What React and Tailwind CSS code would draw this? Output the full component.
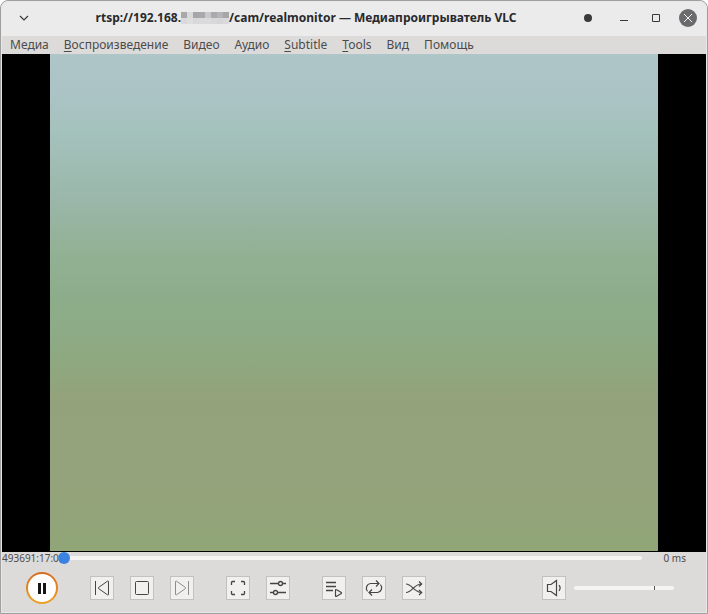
const MENUS = [
  { label: 'Медиа' },
  { label: 'Воспроизведение', mnemonic: true },
  { label: 'Видео' },
  { label: 'Аудио' },
  { label: 'Subtitle', mnemonic: true },
  { label: 'Tools', mnemonic: true },
  { label: 'Вид' },
  { label: 'Помощь' },
];

// Pixelated cover over the private part of the address
const MOSAIC = [
  'bg-[#a9a8aa]', 'bg-[#d9d9db]', 'bg-[#a6a5a7]', 'bg-[#a9a8aa]', 'bg-[#c9c9cb]', 'bg-[#aaa9ab]', 'bg-[#b4b3b5]', 'bg-[#a6a5a7]',
  'bg-[#dadadc]', 'bg-[#dededf]', 'bg-[#d8d8da]', 'bg-[#dadadc]', 'bg-[#dadadc]', 'bg-[#d8d8da]', 'bg-[#d6d6d8]', 'bg-[#dadadc]',
];

function Icon({ children }) {
  return (
    <svg viewBox="0 0 24 24" className="size-6 shrink-0" fill="none" stroke="currentColor" aria-hidden="true">
      {children}
    </svg>
  );
}

function WindowButton({ label, children }) {
  return (
    <button type="button" aria-label={label} className="flex h-8 w-8 items-center justify-center text-[#3a3a3c]">
      {children}
    </button>
  );
}

function ToolButton({ label, muted, children }) {
  return (
    <button
      type="button"
      aria-label={label}
      className={`flex size-6 items-center justify-center bg-[#f1f0ef] outline -outline-offset-1 outline-[#c3c1bf] ${muted ? 'text-[#8e8d8d]' : 'text-[#454546]'}`}
    >
      <Icon>{children}</Icon>
    </button>
  );
}

function TitleBar() {
  return (
    <header className="flex h-[34px] items-center bg-[#ebebec] pl-1.5 pr-0.5">
      <WindowButton label="Меню окна">
        <Icon><path strokeWidth="1.200" d="M8 9l4 4 4-4" /></Icon>
      </WindowButton>
      <h1 className="flex flex-1 items-center justify-center whitespace-nowrap pb-0.5 text-[12px] leading-4 font-bold text-[#29292b]">
        <span>rtsp://192.168.</span>
        <span className="grid w-12 grid-cols-8" aria-hidden="true">
          {MOSAIC.map((tone, i) => (
            <span key={i} className={`h-1.5 ${tone}`} />
          ))}
        </span>
        <span>/cam/realmonitor — Медиапроигрыватель VLC</span>
      </h1>
      <div className="flex">
        <div className="pr-1">
          <WindowButton label="Закрепить">
            <Icon><circle cx="12" cy="11" r="4" fill="currentColor" stroke="none" /></Icon>
          </WindowButton>
        </div>
        <WindowButton label="Свернуть">
          <Icon><path d="M8 13.500h8" /></Icon>
        </WindowButton>
        <WindowButton label="Развернуть">
          <Icon><path d="M8.500 7.500h7v7h-7z" /></Icon>
        </WindowButton>
        <WindowButton label="Закрыть">
          <Icon>
            <circle cx="12" cy="11" r="9" fill="#6b6a6c" stroke="none" />
            <path d="M8 7l8 8M16 7l-8 8" stroke="#f2f2f2" />
          </Icon>
        </WindowButton>
      </div>
    </header>
  );
}

function MenuBar() {
  return (
    <nav className="flex h-[18px] items-center gap-[15px] bg-[#dddbda] pl-2 text-[12px] leading-4 text-[#4c4b4c]">
      {MENUS.map(({ label, mnemonic }) => (
        <button key={label} type="button" className="whitespace-nowrap">
          {mnemonic ? (
            <>
              <span className="underline underline-offset-2">{label[0]}</span>
              {label.slice(1)}
            </>
          ) : (
            label
          )}
        </button>
      ))}
    </nav>
  );
}

function SeekBar() {
  return (
    <div className="flex h-3 items-center text-[10px] leading-3 text-[#4c4b4c]">
      <span className="w-14 whitespace-nowrap">493691:17:0</span>
      <input
        type="range"
        aria-label="Позиция воспроизведения"
        min="0"
        max="100"
        defaultValue="0"
        className="h-3 min-w-0 flex-1 appearance-none bg-transparent [&::-webkit-slider-runnable-track]:h-1 [&::-webkit-slider-runnable-track]:rounded-full [&::-webkit-slider-runnable-track]:bg-[#f5f4f2] [&::-webkit-slider-thumb]:-mt-1 [&::-webkit-slider-thumb]:size-3 [&::-webkit-slider-thumb]:appearance-none [&::-webkit-slider-thumb]:rounded-full [&::-webkit-slider-thumb]:bg-[#3c82e0]"
      />
      <span className="w-16 pr-5 text-right">0 ms</span>
    </div>
  );
}

function Controls() {
  return (
    <div className="flex h-12 items-center pl-6 pr-8">
      <button
        type="button"
        aria-label="Пауза"
        className="mr-8 size-8 rounded-full bg-linear-to-b from-[#d66a20] to-[#eda323] p-0.5"
      >
        <span className="flex size-7 items-center justify-center gap-0.5 rounded-full bg-white">
          <span className="h-[11px] w-[3px] bg-[#161616]" />
          <span className="h-[11px] w-[3px] bg-[#161616]" />
        </span>
      </button>
      <div className="flex gap-8">
        <div className="flex gap-4">
          <ToolButton label="Предыдущее">
            <path d="M5.500 5v14M18.500 5.500v13a.6.6 0 0 1-.9.4L8.500 12.500a.6.6 0 0 1 0-1L17.600 5.100a.6.6 0 0 1 .9.4z" />
          </ToolButton>
          <ToolButton label="Стоп">
            <rect x="5.500" y="5.500" width="13" height="13" rx="1" />
          </ToolButton>
          <ToolButton label="Следующее" muted>
            <path d="M18.500 5v14M5.500 5.500v13a.6.6 0 0 0 .9.4L15.500 12.500a.6.6 0 0 0 0-1L6.400 5.100a.6.6 0 0 0-.9.4z" />
          </ToolButton>
        </div>
        <div className="flex gap-4">
          <ToolButton label="Полный экран">
            <path strokeWidth="1.300" d="M5.500 9V6.500a1 1 0 0 1 1-1H9M15 5.500h2.500a1 1 0 0 1 1 1V9M18.500 15v2.500a1 1 0 0 1-1 1H15M9 18.500H6.500a1 1 0 0 1-1-1V15" />
          </ToolButton>
          <ToolButton label="Расширенные настройки">
            <path strokeWidth="1.300" d="M4 7.500h8.500M16.500 7.500H20M4 16.500h3.500M11.500 16.500H20" />
            <circle cx="14.500" cy="7.500" r="2" strokeWidth="1.300" />
            <circle cx="9.500" cy="16.500" r="2" strokeWidth="1.300" />
          </ToolButton>
        </div>
        <div className="flex gap-4">
          <ToolButton label="Плейлист">
            <path d="M4 6.500h10M4 10.500h10M4 14.500h7" strokeWidth="1.300" />
            <path d="M13.500 14v6a.5.5 0 0 0 .8.400l5-3a.5.5 0 0 0 0-.8l-5-3a.5.5 0 0 0-.8.400z" strokeWidth="1.200" />
          </ToolButton>
          <ToolButton label="Повтор">
            <path strokeWidth="1.200" d="M5.500 15.400A4.800 4.800 0 0 1 8.500 7.500h8M14 4.500l3 3-3 3M18.500 8.600A4.800 4.800 0 0 1 15.500 16.500h-8M10 13.500l-3 3 3 3" />
          </ToolButton>
          <ToolButton label="Случайный порядок">
            <path strokeWidth="1.200" d="M4 8c6 0 8 8.500 15.500 8.500M4 16.500C10 16.500 12 8 19.500 8M17 5.500 19.700 8 17 10.500M17 14l2.700 2.500L17 19" />
          </ToolButton>
        </div>
      </div>
      <div className="ml-auto flex items-center gap-2">
        <ToolButton label="Звук">
          <path strokeWidth="1.200" d="M5.500 8.500v7H9l5.500 4V4.500L9 8.500zM17 9.200a4.500 4.500 0 0 1 0 5.600" />
        </ToolButton>
        <input
          type="range"
          aria-label="Громкость"
          min="0"
          max="125"
          defaultValue="101"
          className="h-4 w-[100px] appearance-none bg-transparent [&::-webkit-slider-runnable-track]:h-1 [&::-webkit-slider-runnable-track]:rounded-full [&::-webkit-slider-runnable-track]:bg-[#f5f4f2] [&::-webkit-slider-thumb]:h-1 [&::-webkit-slider-thumb]:w-px [&::-webkit-slider-thumb]:appearance-none [&::-webkit-slider-thumb]:bg-[#555]"
        />
      </div>
    </div>
  );
}

export default function App() {
  return (
    <div className="flex min-h-screen flex-col bg-white font-['Noto_Sans','Open_Sans',sans-serif]">
      <div className="flex flex-1 flex-col rounded-t-lg border border-[#a09f9f] bg-[#dcdbd9]">
        <main className="flex flex-1 flex-col overflow-hidden rounded-t-[7px] border border-[#e9e8e8]">
          <TitleBar />
          <MenuBar />
          <section aria-label="Видео" className="flex flex-1 bg-black px-12 pb-px">
            <div className="flex-1 bg-[linear-gradient(to_bottom,#afc6c8_0%,#a9c2c2_11%,#a4c2bc_16%,#9ab7aa_29%,#93b297_38%,#8cad8a_49%,#8daa84_58%,#90a67c_65%,#93a27a_69%,#93a37a_92%,#90a677_100%)]" />
          </section>
          <SeekBar />
          <Controls />
        </main>
      </div>
    </div>
  );
}
